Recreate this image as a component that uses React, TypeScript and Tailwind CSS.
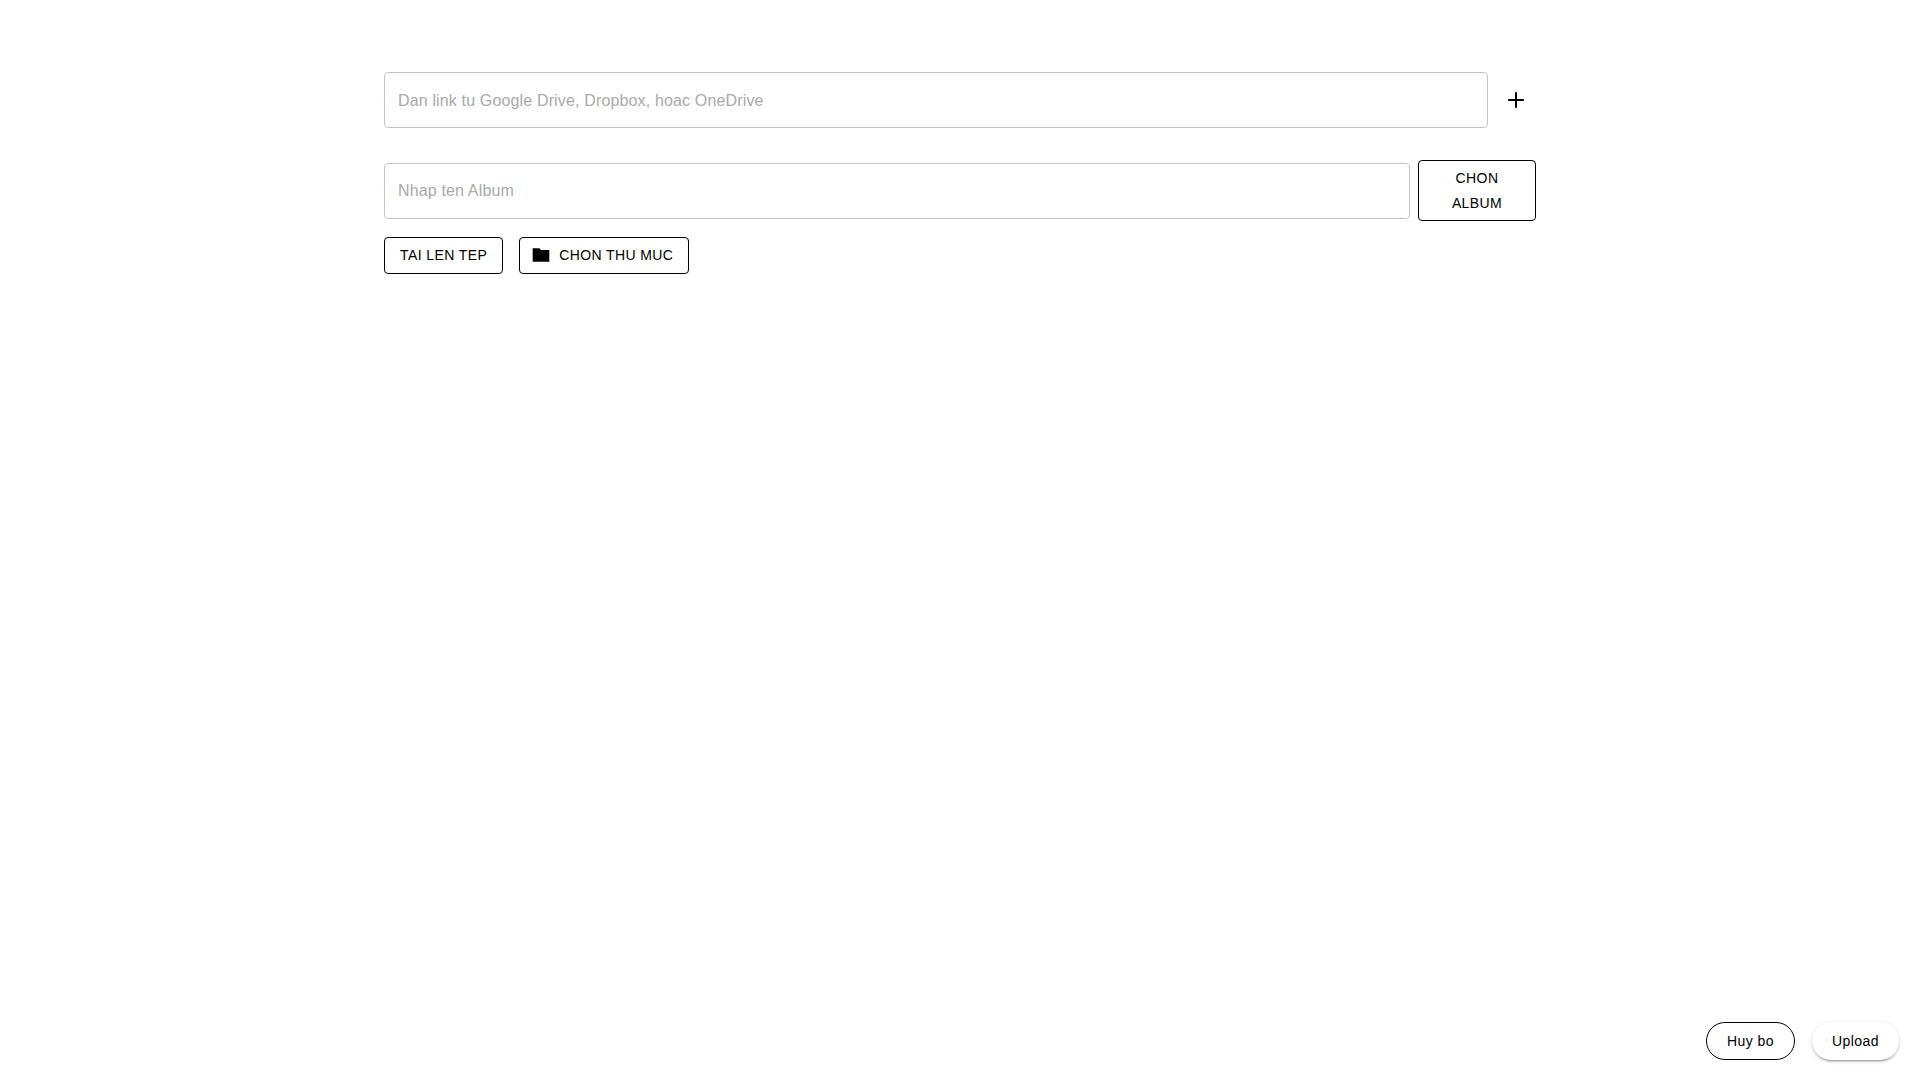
const font = { fontFamily: '"Liberation Sans", Arial, sans-serif' };

const inputCls =
  'rounded border border-[#c4c4c4] bg-white px-[13px] py-[15.5px] text-base leading-[23px] tracking-[0.15px] text-black outline-none placeholder:text-[#a9a9a9]';
const btnCls =
  'rounded border border-black bg-white text-sm leading-[24.5px] tracking-[0.4px] text-black uppercase';

export default function App() {
  return (
    <div style={font} className="flex min-h-screen flex-col bg-white text-black [text-rendering:geometricPrecision]">
      <div className="mx-auto w-[1152px] pt-[72px]">
        {/* link row */}
        <div className="flex items-center">
          <input className={`${inputCls} w-[1104px] shrink-0`} placeholder="Dan link tu Google Drive, Dropbox, hoac OneDrive" />
          <button className="ml-1 flex h-12 w-12 shrink-0 items-center justify-center">
            <svg viewBox="0 0 24 24" className="h-6 w-6" fill="none" stroke="currentColor" strokeWidth={2}>
              <path d="M12 4.2v15.6M4.2 12h15.6" />
            </svg>
          </button>
        </div>

        {/* album row */}
        <div className="mt-8 flex items-center gap-2">
          <input className={`${inputCls} min-w-0 flex-1`} placeholder="Nhap ten Album" />
          <button className={`${btnCls} w-[118px] shrink-0 px-[15px] py-[5px]`}>Chon Album</button>
        </div>

        <div className="mt-4 flex gap-4">
          <button className={`${btnCls} px-[15px] py-[5px]`}>Tai len tep</button>
          <button className={`${btnCls} flex items-center px-[15px] py-[5px]`}>
            <svg viewBox="0 0 24 24" className="mr-2 -ml-1 h-5 w-5" fill="currentColor">
              <path d="M10 4H2v16h20V6H12l-2-2z" />
            </svg>
            Chon thu muc
          </button>
        </div>
      </div>

      {/* footer actions */}
      <div className="mt-auto flex justify-end gap-[17px] pr-[21px] pb-5">
        <button className="h-[38px] w-[89px] rounded-full border border-black bg-white text-sm tracking-[0.4px]">Huy bo</button>
        <button className="h-[38px] w-[87px] rounded-full bg-white text-sm tracking-[0.4px] shadow-[0px_3px_1px_-2px_rgba(0,0,0,0.2),0px_2px_2px_0px_rgba(0,0,0,0.14),0px_1px_5px_0px_rgba(0,0,0,0.12)]">Upload</button>
      </div>
    </div>
  );
}
